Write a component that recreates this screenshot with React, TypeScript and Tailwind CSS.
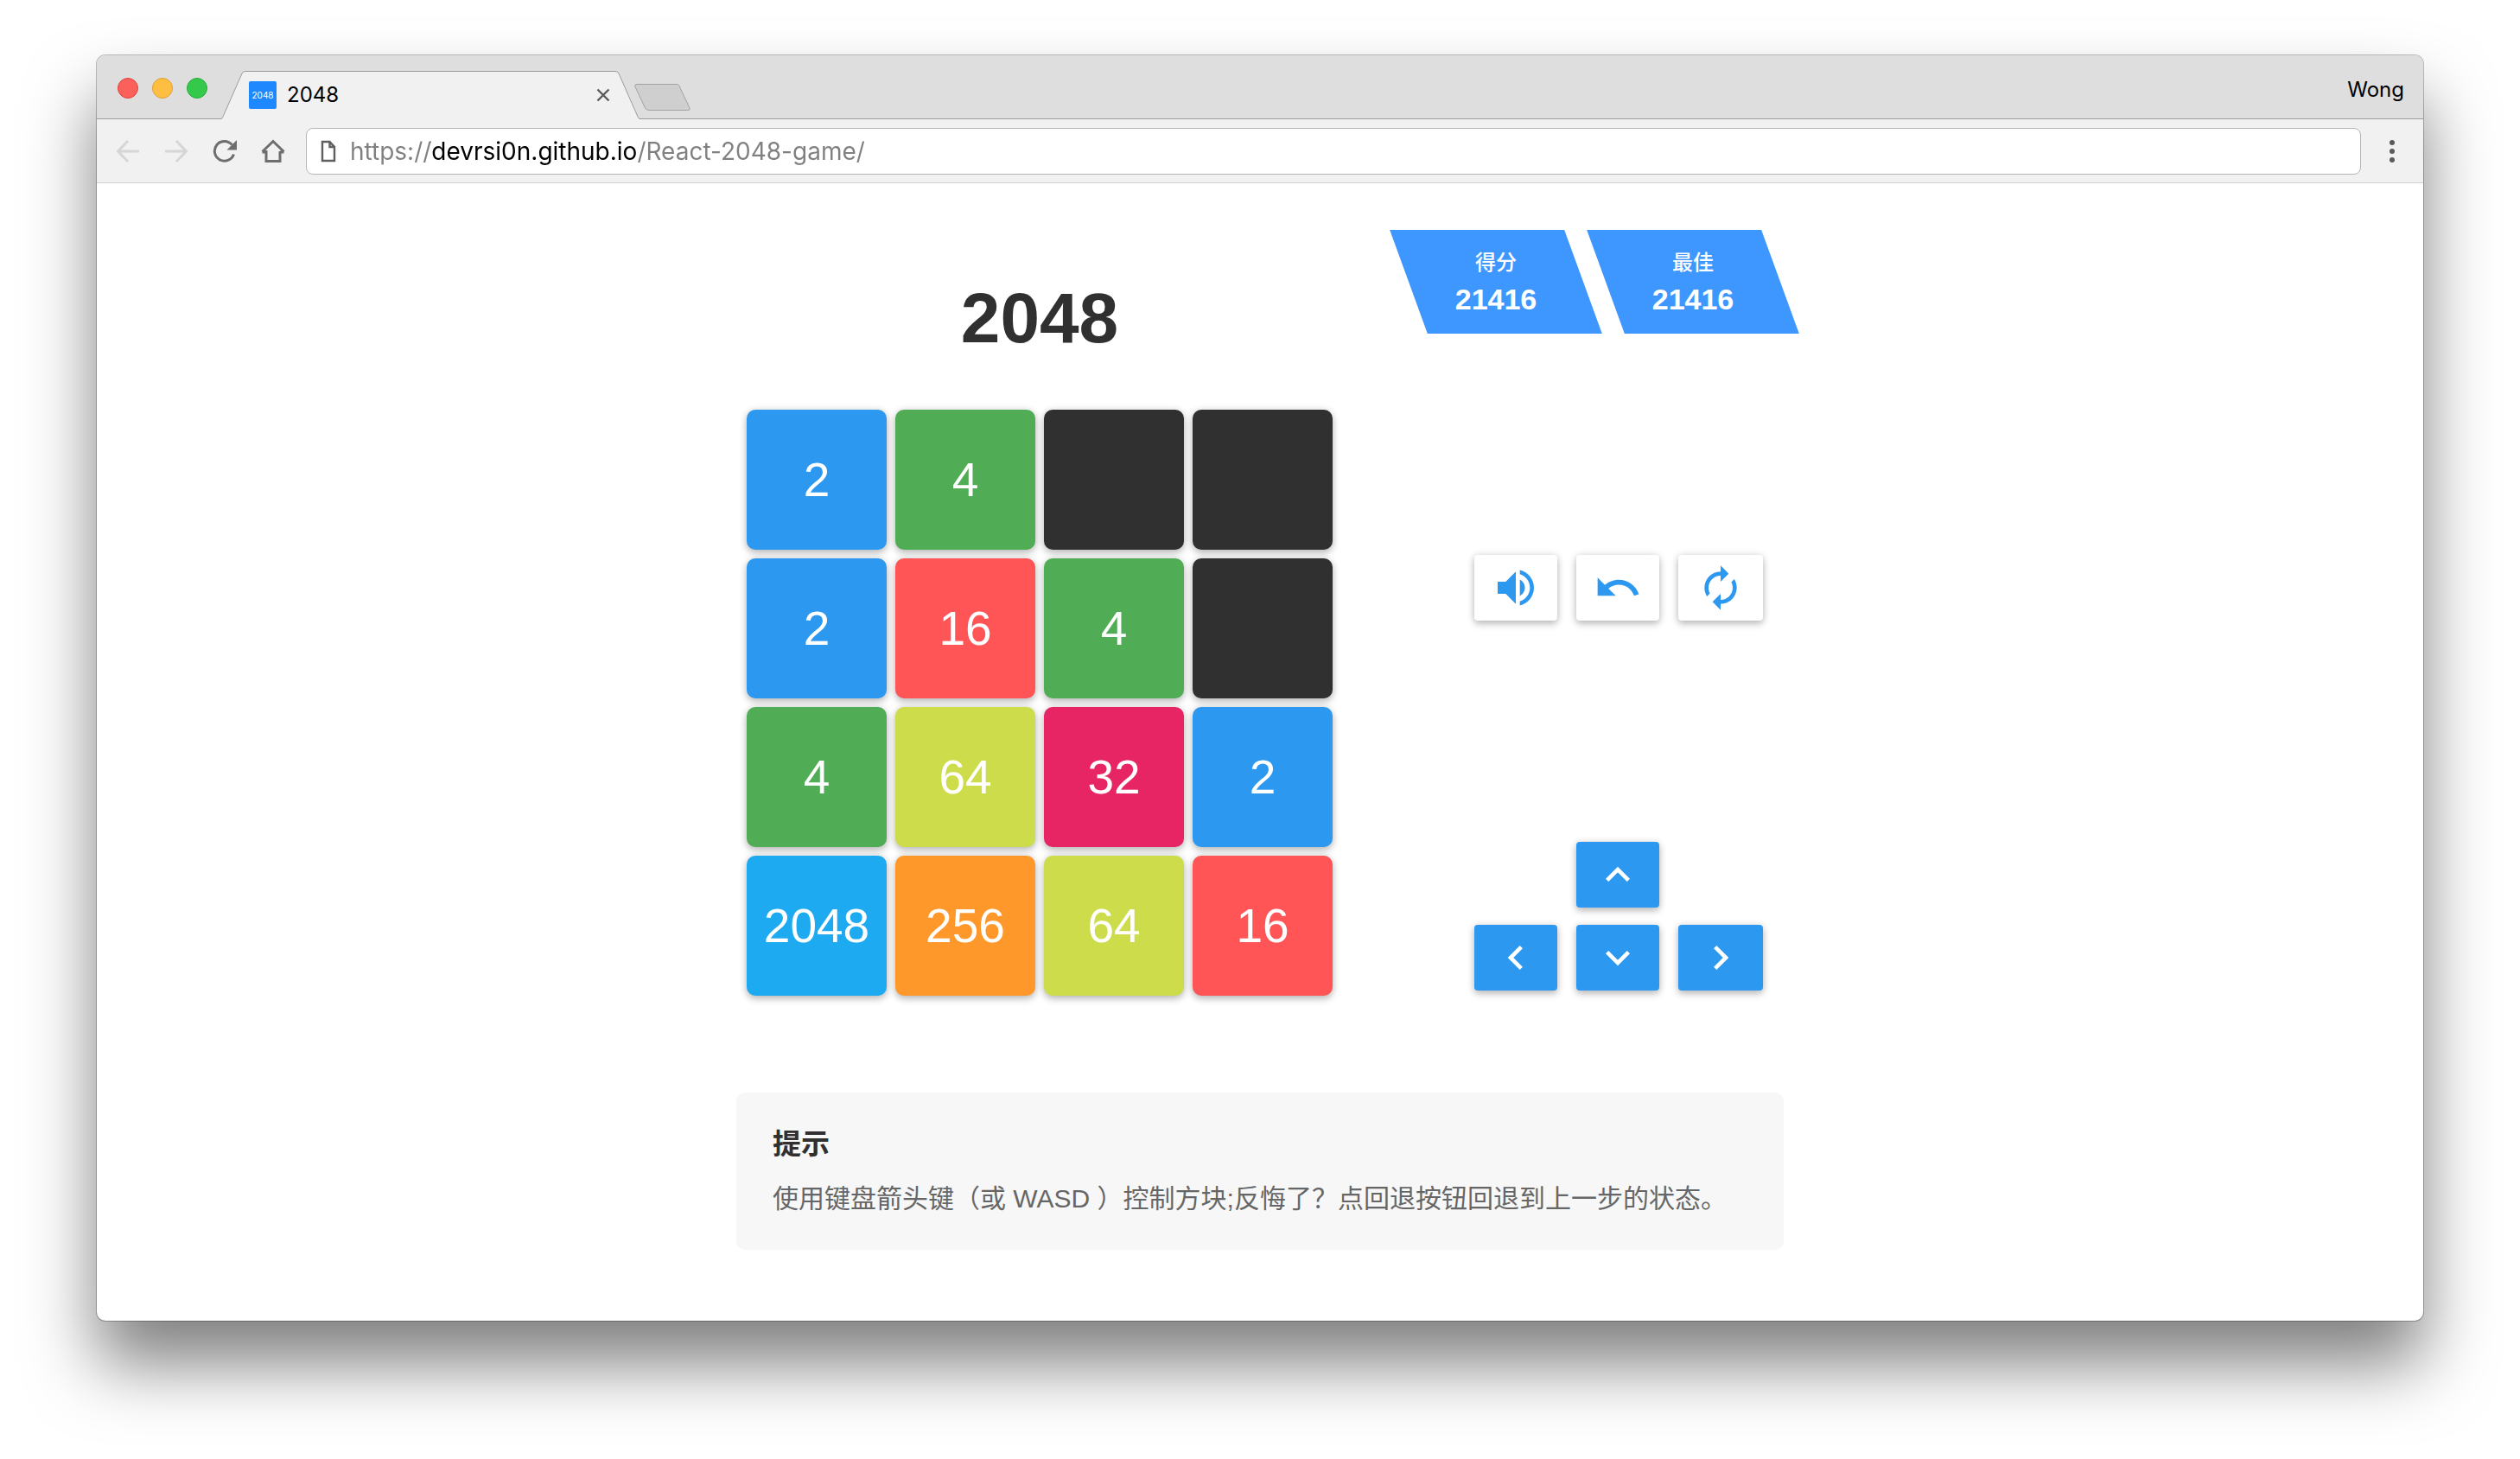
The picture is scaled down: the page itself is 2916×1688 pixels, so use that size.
import React from "react";

const tileColors: Record<number, string> = {
  0: "bg-[#303030]",
  2: "bg-[#2d98f0]",
  4: "bg-[#51ad55]",
  16: "bg-[#ff5557]",
  32: "bg-[#e72564]",
  64: "bg-[#cddc4a]",
  256: "bg-[#ff982a]",
  2048: "bg-[#1eaaf1]",
};

const board = [
  [2, 4, 0, 0],
  [2, 16, 4, 0],
  [4, 64, 32, 2],
  [2048, 256, 64, 16],
];

const paths = {
  volume:
    "M3 9v6h4l5 5V4L7 9H3zm13.5 3c0-1.77-1.02-3.29-2.5-4.03v8.05c1.48-.73 2.5-2.25 2.5-4.02zM14 3.23v2.06c2.89.86 5 3.54 5 6.71s-2.11 5.85-5 6.71v2.06c4.01-.91 7-4.49 7-8.77s-2.99-7.86-7-8.77z",
  undo: "M12.5 8c-2.65 0-5.05.99-6.9 2.6L2 7v9h9l-3.62-3.62c1.39-1.16 3.16-1.88 5.12-1.88 3.54 0 6.55 2.31 7.6 5.5l2.37-.78C21.08 11.03 17.15 8 12.5 8z",
  renew:
    "M12 6v3l4-4-4-4v3c-4.42 0-8 3.58-8 8 0 1.57.46 3.03 1.24 4.26L6.7 14.8c-.45-.83-.7-1.79-.7-2.8 0-3.31 2.69-6 6-6zm6.76 1.74L17.3 9.2c.44.84.7 1.79.7 2.8 0 3.31-2.69 6-6 6v-3l-4 4 4 4v-3c4.42 0 8-3.58 8-8 0-1.57-.46-3.03-1.24-4.26z",
  up: "M7.41 15.41L12 10.83l4.59 4.58L18 14l-6-6-6 6z",
  down: "M7.41 8.59L12 13.17l4.59-4.58L18 10l-6 6-6-6z",
  left: "M15.41 16.59L10.83 12l4.58-4.59L14 6l-6 6 6 6z",
  right: "M8.59 16.59L13.17 12 8.59 7.41 10 6l6 6-6 6z",
};

function Glyph({ d }: { d: string }) {
  return (
    <svg viewBox="0 0 24 24" className="size-14 shrink-0 fill-current" aria-hidden="true">
      <path d={d} />
    </svg>
  );
}

function ControlButton({ label, d, className }: { label: string; d: string; className: string }) {
  return (
    <button
      type="button"
      aria-label={label}
      className={`flex h-[76px] items-center justify-center rounded shadow-[0_4px_8px_rgba(0,0,0,0.22),0_0_8px_rgba(0,0,0,0.12)] ${className}`}
    >
      <Glyph d={d} />
    </button>
  );
}

function Score({ label, value }: { label: string; value: number }) {
  return (
    <div className="relative flex h-[120px] w-[202px] flex-col items-center text-white">
      <div className="absolute inset-0 skew-x-20 bg-[#3e97ff]" />
      <span className="relative mt-[22px] text-[24px] leading-8 font-medium">{label}</span>
      <span className="relative mt-1.5 text-[34px] leading-10 font-bold">{value}</span>
    </div>
  );
}

function TabStrip() {
  return (
    <div className="flex h-[74px] items-end border-b border-[#9b9b9b] bg-[#dedede]">
      <div className="mb-[23px] flex gap-4 pl-6">
        <button type="button" aria-label="Close window" className="size-6 rounded-full border border-[#e0443e] bg-[#fc605b]" />
        <button type="button" aria-label="Minimize window" className="size-6 rounded-full border border-[#dfa035] bg-[#fdbe41]" />
        <button type="button" aria-label="Zoom window" className="size-6 rounded-full border border-[#2aab3d] bg-[#34c94a]" />
      </div>
      <div className="relative -mb-px ml-4 flex h-14 w-[484px] items-center pr-8 pl-8">
        <svg viewBox="0 0 484 56" className="absolute inset-0 size-full" aria-hidden="true">
          <path d="M0 56Q1 55 2 53L24 3Q25 .5 28 .5H456Q459 .5 460 3L482 53Q483 55 484 56Z" fill="#f1f1f1" />
          <path d="M0 55.500Q1 55 2 53L24 3Q25 .5 28 .5H456Q459 .5 460 3L482 53Q483 55 484 55.500" fill="none" stroke="#9b9b9b" />
        </svg>
        <span className="relative flex size-8 items-center justify-center rounded-xs bg-[#1e88ff] text-[10px] text-white">2048</span>
        <span className="relative ml-3 flex-1 text-[24px] leading-8 text-black">2048</span>
        <button type="button" aria-label="Close tab" className="relative">
          <svg viewBox="0 0 20 20" className="size-5" aria-hidden="true">
            <path d="M3.500 3.500L16.500 16.500M16.500 3.500L3.500 16.500" stroke="#5a5a5a" strokeWidth="2.400" fill="none" />
          </svg>
        </button>
      </div>
      <button type="button" aria-label="New tab" className="relative -ml-1.5 mb-2">
        <svg viewBox="0 0 66 33" className="h-[33px] w-[66px]" aria-hidden="true">
          <path d="M3 1.500H49Q51 1.500 52 3.500L64 29Q65 31.500 62 31.500H17Q14 31.500 12.500 29L.8 4Q0 1.500 3 1.500Z" fill="#cfcfcf" stroke="#a2a2a2" />
        </svg>
      </button>
      <span className="mr-[22px] mb-[17px] ml-auto text-[24px] leading-8 text-black">Wong</span>
    </div>
  );
}

function Toolbar() {
  return (
    <div className="flex h-[74px] items-center border-b border-[#cfcfcf] bg-[#f1f1f1] pr-5 pl-5">
      <div className="flex gap-6 text-[#6e6e6e]">
        <button type="button" aria-label="Back" className="text-[#d6d6d6]">
          <svg viewBox="0 0 32 32" className="size-8" fill="none" stroke="currentColor" strokeWidth="3" aria-hidden="true">
            <path d="M29 16H5M16 4L4.500 16L16 28" />
          </svg>
        </button>
        <button type="button" aria-label="Forward" className="text-[#d6d6d6]">
          <svg viewBox="0 0 32 32" className="size-8" fill="none" stroke="currentColor" strokeWidth="3" aria-hidden="true">
            <path d="M3 16H27M16 4L27.500 16L16 28" />
          </svg>
        </button>
        <button type="button" aria-label="Reload">
          <svg viewBox="0 0 32 32" className="size-8" aria-hidden="true">
            <path d="M26.500 19.500A11.400 11.400 0 1 1 24.500 8.500" fill="none" stroke="currentColor" strokeWidth="3" />
            <path d="M30 3V14.500H18.500Z" fill="currentColor" />
          </svg>
        </button>
        <button type="button" aria-label="Home">
          <svg viewBox="0 0 32 32" className="size-8" fill="none" stroke="currentColor" strokeWidth="3" aria-hidden="true">
            <path d="M8 16V27.500H24V16M3.500 17H8L8 15M28.500 17H24M3.500 16.500L16 4.500L28.500 16.500" />
          </svg>
        </button>
      </div>
      <div className="ml-[22px] flex h-[54px] flex-1 items-center rounded-lg border border-[#b5b5b5] bg-white pl-4">
        <svg viewBox="0 0 18 26" className="h-[26px] w-[18px]" fill="none" stroke="#5f5f5f" strokeWidth="2.400" aria-hidden="true">
          <path d="M2 2H10.500L16 8V24H2ZM10.500 2V8H16" />
        </svg>
        <input
          type="text"
          aria-label="Address"
          defaultValue="https://devrsi0n.github.io/React-2048-game/"
          className="ml-4 h-10 flex-1 bg-[linear-gradient(to_right,#808080_93px,#000_93px,#000_332px,#808080_332px)] bg-clip-text text-[28px] text-transparent outline-none"
        />
      </div>
      <button type="button" aria-label="Menu" className="ml-5">
        <svg viewBox="0 0 32 32" className="size-8 fill-[#5a5a5a]" aria-hidden="true">
          <circle cx="16" cy="6" r="3" />
          <circle cx="16" cy="16" r="3" />
          <circle cx="16" cy="26" r="3" />
        </svg>
      </button>
    </div>
  );
}

export default function App() {
  return (
    <div className="min-h-screen bg-white px-28 pt-16 pb-40">
      <div className="overflow-hidden rounded-[10px] bg-white font-['Inter','Noto_Sans_CJK_SC',sans-serif] shadow-[0_0_0_1px_rgba(0,0,0,0.25),0_50px_80px_rgba(0,0,0,0.5)]">
        <header>
          <TabStrip />
          <Toolbar />
        </header>
        <main className="mx-auto max-w-[1212px] pt-[54px] pb-[82px] font-['Liberation_Sans','Noto_Sans_CJK_SC',sans-serif]">
          <div className="flex h-[208px] justify-between pr-1 pl-3">
            <h1 className="w-[678px] pt-[54px] text-center text-[82px] leading-[96px] font-bold text-[#303030]">2048</h1>
            <div className="flex gap-[26px]">
              <Score label="得分" value={21416} />
              <Score label="最佳" value={21416} />
            </div>
          </div>
          <div className="flex justify-between pr-6 pl-3">
            <div className="grid grid-cols-4 gap-2.5">
              {board.flat().map((value, i) => (
                <div
                  key={i}
                  className={`flex size-[162px] items-center justify-center rounded-[10px] text-[55px] text-white shadow-[0_4px_8px_rgba(0,0,0,0.22),0_0_8px_rgba(0,0,0,0.12)] ${tileColors[value]}`}
                >
                  {value > 0 ? value : null}
                </div>
              ))}
            </div>
            <div className="flex flex-col justify-between pt-42 pb-1.5">
              <div className="grid grid-cols-[96px_96px_98px] gap-x-[22px]">
                <ControlButton label="Sound" d={paths.volume} className="bg-white text-[#2d98f0]" />
                <ControlButton label="Undo" d={paths.undo} className="bg-white text-[#2d98f0]" />
                <ControlButton label="Restart" d={paths.renew} className="bg-white text-[#2d98f0]" />
              </div>
              <div className="grid grid-cols-[96px_96px_98px] gap-x-[22px] gap-y-5">
                <ControlButton label="Up" d={paths.up} className="col-start-2 bg-[#2d98f0] text-white" />
                <ControlButton label="Left" d={paths.left} className="col-start-1 bg-[#2d98f0] text-white" />
                <ControlButton label="Down" d={paths.down} className="bg-[#2d98f0] text-white" />
                <ControlButton label="Right" d={paths.right} className="bg-[#2d98f0] text-white" />
              </div>
            </div>
          </div>
          <section className="mt-28 rounded-[10px] bg-[#f7f7f7] px-[42px] pt-9 pb-9">
            <h2 className="text-[33px] leading-[48px] font-bold text-[#303030]">提示</h2>
            <p className="mt-4 text-[30px] leading-[46px] text-[#666]">
              使用键盘箭头键（或 WASD ）控制方块;反悔了？点回退按钮回退到上一步的状态。
            </p>
          </section>
        </main>
      </div>
    </div>
  );
}
